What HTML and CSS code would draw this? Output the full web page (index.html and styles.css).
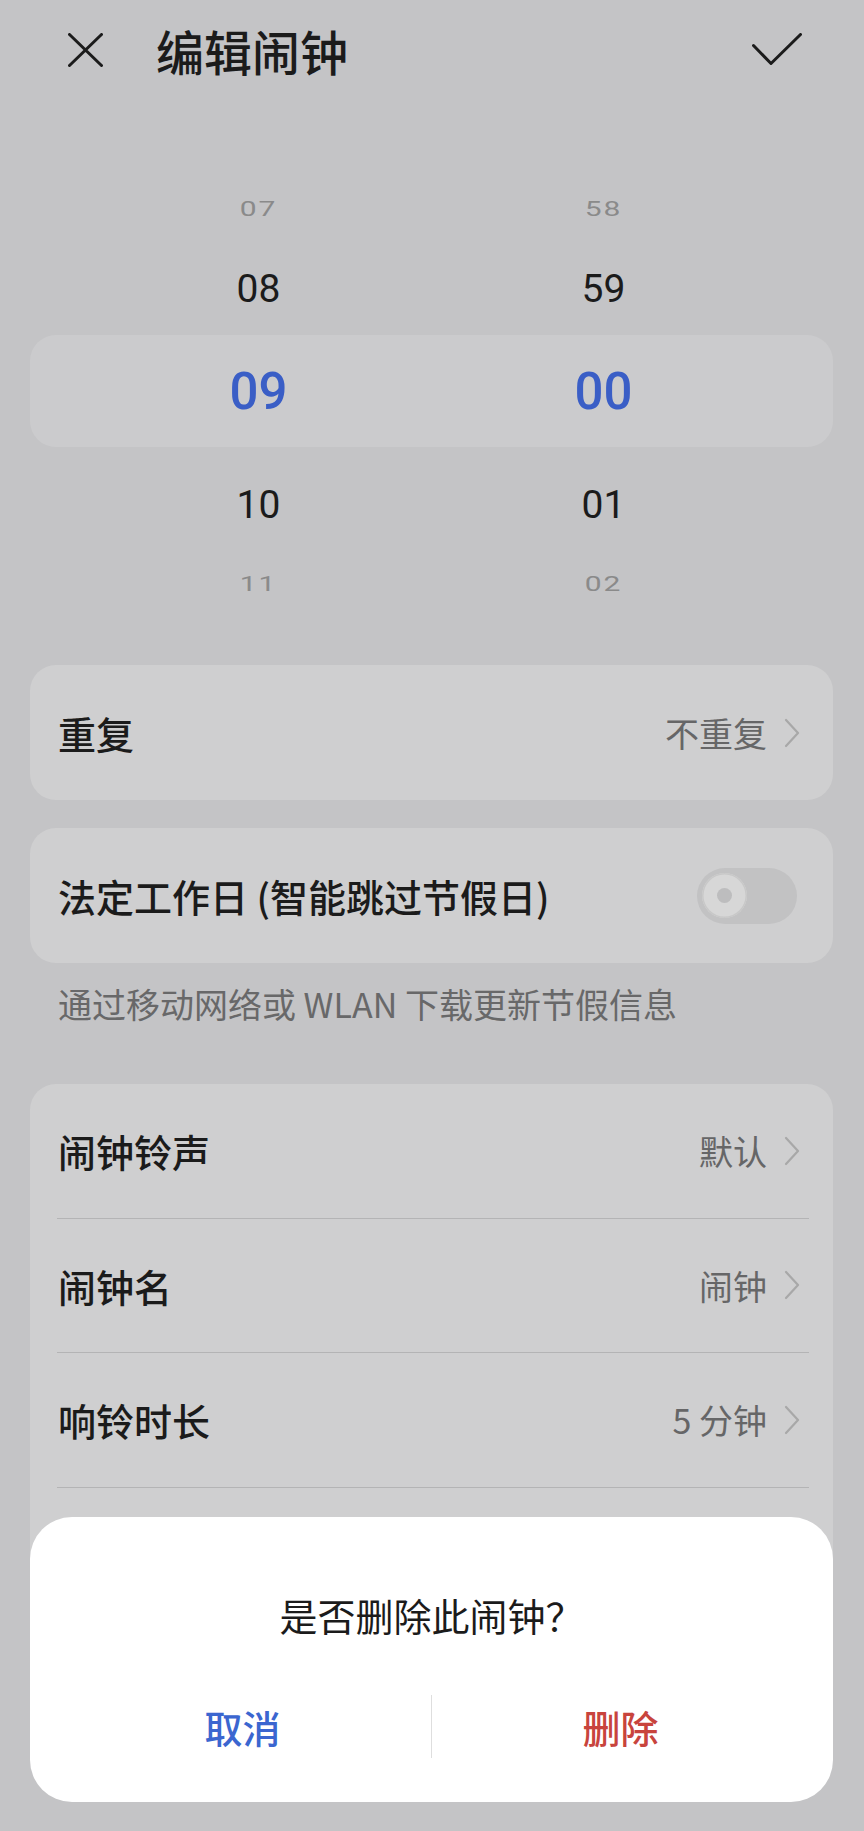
FILE: index.html
```html
<!DOCTYPE html>
<html lang="zh-CN">
<head>
<meta charset="utf-8">
<title>编辑闹钟</title>
<link rel="stylesheet" href="styles.css">
</head>
<body>
<div class="page">
  <header class="topbar">
    <svg class="icon-close" width="35" height="34" viewBox="0 0 35 34"><path d="M1.5 1.5 L33.5 32.5 M33.5 1.5 L1.5 32.5" stroke="#1b1b1b" stroke-width="3" stroke-linecap="round" fill="none"/></svg>
    <h1 class="title">编辑闹钟</h1>
    <svg class="icon-check" width="50" height="34" viewBox="0 0 50 34"><polyline points="1.5,12.5 19,30.5 48.5,1.5" stroke="#1b1b1b" stroke-width="3" stroke-linecap="round" stroke-linejoin="round" fill="none"/></svg>
  </header>

  <section class="picker">
    <div class="wheel-row far first"><span>07</span><span>58</span></div>
    <div class="wheel-row near upper"><span>08</span><span>59</span></div>
    <div class="wheel-row selected"><span>09</span><span>00</span></div>
    <div class="wheel-row near lower"><span>10</span><span>01</span></div>
    <div class="wheel-row far last"><span>11</span><span>02</span></div>
  </section>

  <div class="card">
    <div class="row">
      <span class="label">重复</span>
      <span class="value">不重复</span>
      <svg class="chev" width="16" height="30" viewBox="0 0 16 30"><polyline points="2,2 14,15 2,28" stroke="#a8a8a8" stroke-width="2.2" fill="none" stroke-linejoin="round" stroke-linecap="round"/></svg>
    </div>
  </div>

  <div class="card card-gap">
    <div class="row row-toggle">
      <span class="label">法定工作日 (智能跳过节假日)</span>
      <span class="toggle"><span class="knob"></span></span>
    </div>
  </div>

  <p class="hint">通过移动网络或 WLAN 下载更新节假信息</p>

  <div class="card card-list">
    <div class="row divided">
      <span class="label">闹钟铃声</span>
      <span class="value">默认</span>
      <svg class="chev" width="16" height="30" viewBox="0 0 16 30"><polyline points="2,2 14,15 2,28" stroke="#a8a8a8" stroke-width="2.2" fill="none" stroke-linejoin="round" stroke-linecap="round"/></svg>
    </div>
    <div class="row divided">
      <span class="label">闹钟名</span>
      <span class="value">闹钟</span>
      <svg class="chev" width="16" height="30" viewBox="0 0 16 30"><polyline points="2,2 14,15 2,28" stroke="#a8a8a8" stroke-width="2.2" fill="none" stroke-linejoin="round" stroke-linecap="round"/></svg>
    </div>
    <div class="row divided">
      <span class="label">响铃时长</span>
      <span class="value">5 分钟</span>
      <svg class="chev" width="16" height="30" viewBox="0 0 16 30"><polyline points="2,2 14,15 2,28" stroke="#a8a8a8" stroke-width="2.2" fill="none" stroke-linejoin="round" stroke-linecap="round"/></svg>
    </div>
    <div class="row">
      <span class="label">稍后提醒</span>
      <span class="value">10 分钟，3 次</span>
      <svg class="chev" width="16" height="30" viewBox="0 0 16 30"><polyline points="2,2 14,15 2,28" stroke="#a8a8a8" stroke-width="2.2" fill="none" stroke-linejoin="round" stroke-linecap="round"/></svg>
    </div>
  </div>

  <div class="dialog" role="dialog">
    <p class="dialog-msg">是否删除此闹钟？</p>
    <div class="dialog-actions">
      <button class="btn btn-cancel">取消</button>
      <span class="vdiv"></span>
      <button class="btn btn-delete">删除</button>
    </div>
  </div>
</div>
</body>
</html>
```

FILE: styles.css
```css
html, body {
  margin: 0;
  padding: 0;
  width: 864px;
  height: 1831px;
  overflow: hidden;
  background: #c4c4c6;
}

body {
  font-family: "Noto Sans CJK SC", "Noto Sans", sans-serif;
  color: #1b1b1b;
}

.page {
  position: relative;
  width: 864px;
  height: 1831px;
}

/* header */
.topbar {
  height: 100px;
  display: flex;
  align-items: center;
  padding: 0 62px 0 68px;
}
.icon-close { flex: none; }
.title {
  margin: 0 0 0 53px;
  flex: 1;
  font-size: 48px;
  font-weight: 500;
  line-height: 1;
  color: #1b1b1b;
}
.icon-check { flex: none; }

/* time picker */
.picker {
  margin: 0 31px 0 30px;
  font-family: Roboto, "Noto Sans", sans-serif;
}
.wheel-row {
  display: grid;
  grid-template-columns: 345px 345px;
  padding: 0 57px 0 56px;
  justify-items: center;
  align-items: center;
}
.wheel-row span { display: block; }
.wheel-row.far {
  height: 60px;
  font-size: 30px;
  color: #8a8a8a;
  letter-spacing: 2px;
}
.wheel-row.far span { transform: scaleY(0.7); }
.wheel-row.first { margin-top: 78px; }
.wheel-row.last { height: 40px; }
.wheel-row.near {
  font-size: 39px;
  color: #1b1b1b;
  font-weight: 400;
}
.wheel-row.upper { height: 92px; padding-top: 5px; }
.wheel-row.lower { height: 116px; }
.wheel-row.selected {
  height: 112px;
  background: #cbcbcd;
  border-radius: 26px;
  font-size: 51px;
  font-weight: 500;
  color: #3a5ec6;
}

/* cards */
.card {
  margin: 62px 31px 0 30px;
  background: #cfcfd0;
  border-radius: 26px;
}
.card.card-gap { margin-top: 28px; }
.card.card-list { margin-top: 60px; padding-bottom: 40px; }

.row {
  height: 135px;
  box-sizing: border-box;
  display: flex;
  align-items: center;
  margin: 0 24px 0 27px;
  padding: 0 9px 0 1px;
}
.card-list .row { height: 134.5px; }
.row.divided { border-bottom: 1.5px solid #b4b4b5; }
.row.row-toggle { margin-right: 0; padding-right: 36px; }

.label {
  flex: 1;
  font-size: 38px;
  font-weight: 500;
  color: #1b1b1b;
  white-space: nowrap;
}
.value {
  font-size: 34px;
  color: #666667;
  margin-right: 17px;
}
.chev { flex: none; }

.toggle {
  flex: none;
  width: 100px;
  height: 56px;
  box-sizing: border-box;
  border-radius: 28px;
  background: #c2c2c3;
  display: flex;
  align-items: center;
  padding-left: 5px;
}
.knob {
  width: 45px;
  height: 45px;
  border-radius: 50%;
  background: #d7d7d7;
  box-shadow: 0 0 0 1.5px #c8c8c8 inset;
  display: flex;
  align-items: center;
  justify-content: center;
}
.knob::after {
  content: "";
  width: 15px;
  height: 15px;
  border-radius: 50%;
  background: #bdbdbe;
}

.hint {
  margin: 21px 31px 0 58px;
  height: 40px;
  line-height: 40px;
  font-size: 34px;
  color: #686869;
}

/* dialog overlay */
.dialog {
  position: absolute;
  left: 30px;
  right: 31px;
  bottom: 29px;
  height: 285px;
  background: #ffffff;
  border-radius: 42px;
  display: flex;
  flex-direction: column;
}
.dialog-msg {
  margin: 0;
  padding: 71px 0 53px;
  height: 54px;
  line-height: 54px;
  text-align: center;
  font-size: 38px;
  color: #1b1b1b;
}
.dialog-actions {
  height: 63px;
  display: grid;
  grid-template-columns: 1fr 1px 1fr;
  padding: 0 24px;
  align-items: center;
}
.vdiv {
  width: 1px;
  height: 63px;
  background: #dedede;
}
.btn {
  border: 0;
  background: none;
  padding: 0;
  font-family: "Noto Sans CJK SC", "Noto Sans", sans-serif;
  font-size: 38px;
  font-weight: 500;
  line-height: 63px;
  cursor: pointer;
}
.btn-cancel { color: #3b66d0; }
.btn-delete { color: #c8443d; }
```
